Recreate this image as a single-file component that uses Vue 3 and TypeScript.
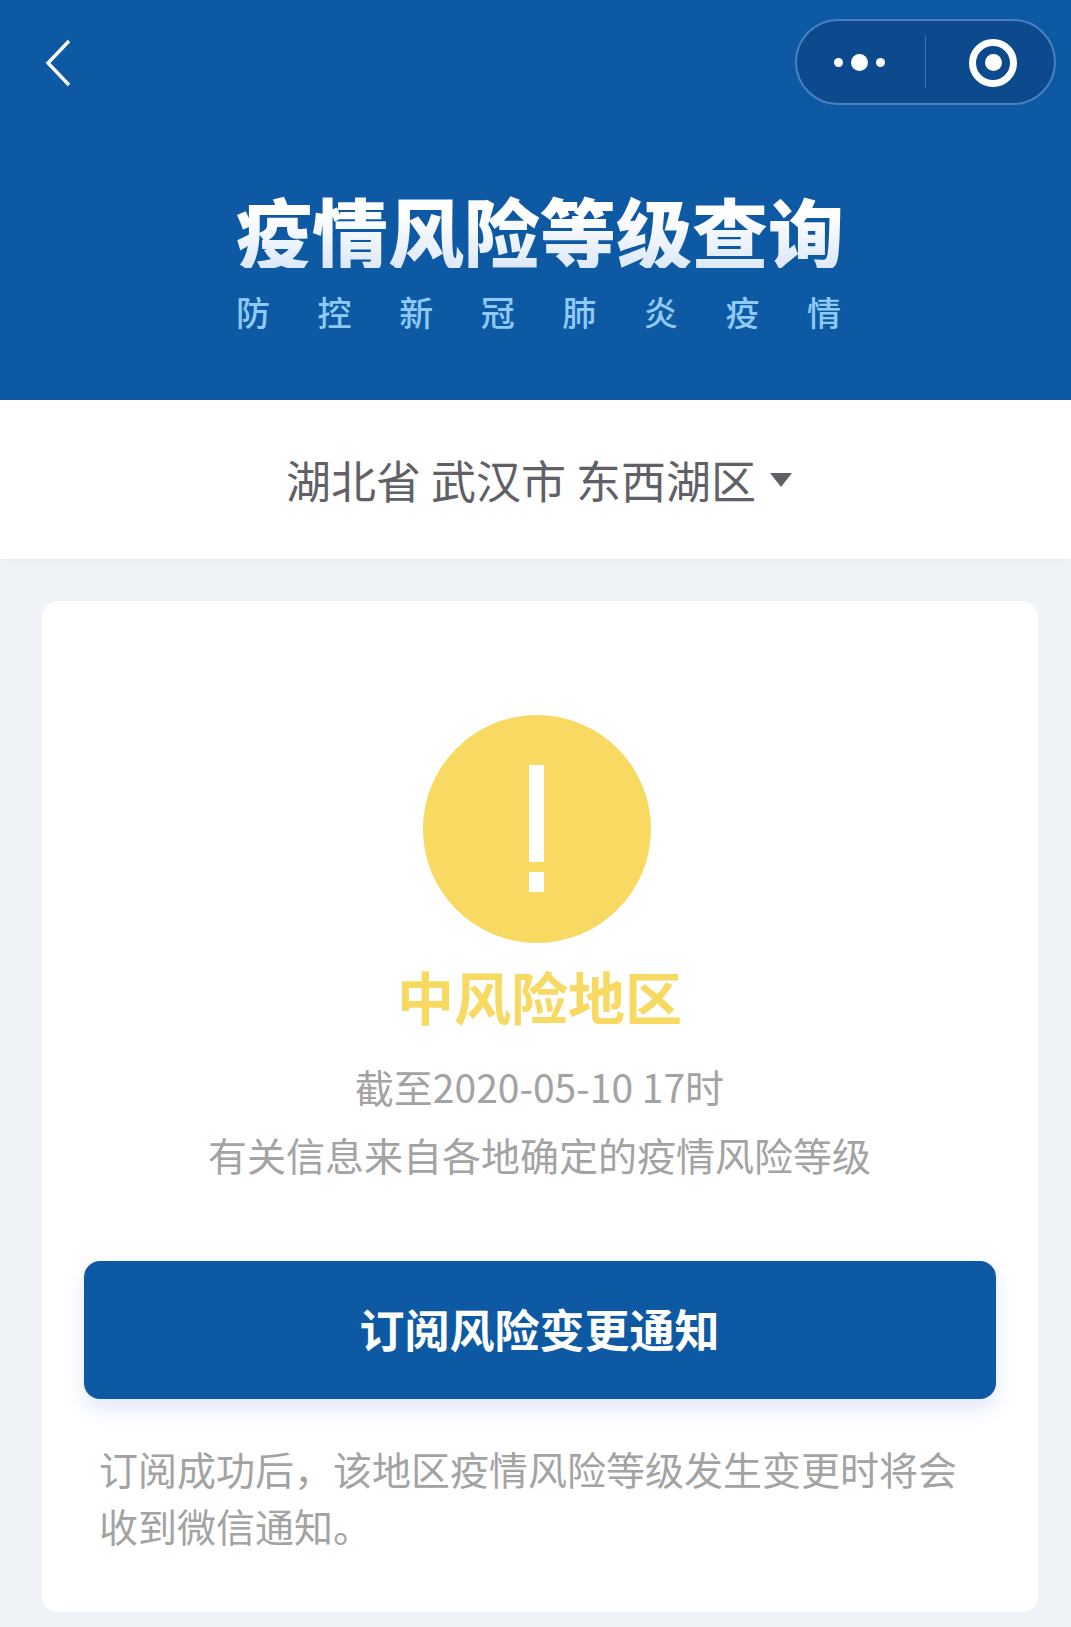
<script setup lang="ts">
const subtitle: string[] = ['防', '控', '新', '冠', '肺', '炎', '疫', '情']
</script>

<template>
  <div class="page">
    <header class="hero">
      <div class="nav">
        <svg class="back" width="26" height="48" viewBox="0 0 26 48">
          <path d="M24 2 L3 24 L24 46" fill="none" stroke="#fff" stroke-width="3.4" />
        </svg>
        <div class="capsule">
          <div class="more">
            <i class="dot"></i><i class="dot big"></i><i class="dot"></i>
          </div>
          <div class="sep"></div>
          <div class="target"><i class="core"></i></div>
        </div>
      </div>
      <div class="title-block">
        <h1 class="title">疫情风险等级查询</h1>
        <div class="subtitle">
          <span v-for="(c, i) in subtitle" :key="i">{{ c }}</span>
        </div>
      </div>
    </header>

    <div class="location">
      <span class="loc-text">湖北省 武汉市 东西湖区</span>
      <i class="caret"></i>
    </div>

    <section class="card">
      <div class="alert">
        <i class="bar"></i>
        <i class="point"></i>
      </div>
      <h2 class="level">中风险地区</h2>
      <p class="meta date">截至2020-05-10 17时</p>
      <p class="meta">有关信息来自各地确定的疫情风险等级</p>
      <button class="subscribe">订阅风险变更通知</button>
      <p class="note">订阅成功后，该地区疫情风险等级发生变更时将会收到微信通知。</p>
    </section>
  </div>
</template>

<style>
html, body { margin: 0; background: #eff3f7; }
</style>

<style scoped>
.page {
  width: 1071px;
  height: 1627px;
  overflow: hidden;
  background: #eff3f7;
  font-family: "Noto Sans CJK SC", "Noto Sans", sans-serif;
}
.hero {
  height: 400px;
  box-sizing: border-box;
  background: #0d59a3;
  padding-top: 19px;
}
.nav {
  display: flex;
  justify-content: space-between;
  align-items: center;
  padding: 0 15px 0 45px;
}
.back { display: block; margin-top: 2px; }
.capsule {
  width: 261px;
  height: 86px;
  box-sizing: border-box;
  display: flex;
  align-items: center;
  border: 2px solid #4a80bf;
  border-radius: 43px;
  background: #0d4a8d;
}
.more {
  width: 128px;
  display: flex;
  justify-content: flex-end;
  align-items: center;
  gap: 8px;
  padding-right: 40px;
  box-sizing: border-box;
}
.dot { width: 9px; height: 9px; border-radius: 50%; background: #fff; }
.dot.big { width: 17px; height: 17px; }
.sep { width: 1px; height: 52px; background: #3f76b5; }
.target {
  width: 48px;
  height: 48px;
  box-sizing: border-box;
  margin: 1px 0 0 43px;
  border: 7px solid #fff;
  border-radius: 50%;
  display: flex;
  align-items: center;
  justify-content: center;
}
.core { width: 17px; height: 17px; border-radius: 50%; background: #fff; }
.title-block {
  width: 605px;
  margin: 87px 0 0 236px;
}
.title {
  margin: 0;
  font-size: 76px;
  line-height: 76px;
  font-weight: 900;
  white-space: nowrap;
  background: linear-gradient(180deg, #ffffff 30%, #dce8f9 100%);
  -webkit-background-clip: text;
  background-clip: text;
  color: transparent;
}
.subtitle {
  margin-top: 26px;
  display: flex;
  justify-content: space-between;
  font-size: 34px;
  line-height: 36px;
  font-weight: 500;
  color: #8fcaf6;
}
.location {
  height: 159px;
  background: #fff;
  display: flex;
  align-items: center;
  justify-content: center;
  padding-left: 9px;
  box-sizing: border-box;
  box-shadow: 0 2px 4px rgba(0, 0, 0, 0.03);
  position: relative;
}
.loc-text {
  font-size: 45px;
  line-height: 60px;
  color: #5f6166;
  white-space: pre;
}
.caret {
  width: 0;
  height: 0;
  margin: 0 2px 0 14px;
  border-left: 11px solid transparent;
  border-right: 11px solid transparent;
  border-top: 14px solid #5f6166;
}
.card {
  width: 996px;
  height: 1011px;
  margin: 42px 0 0 42px;
  box-sizing: border-box;
  padding: 114px 43px 0 42px;
  background: #fff;
  border-radius: 16px;
  display: flex;
  flex-direction: column;
  align-items: center;
}
.alert {
  width: 228px;
  height: 228px;
  flex: none;
  margin-left: -6px;
  padding-top: 50px;
  box-sizing: border-box;
  border-radius: 50%;
  background: #f8d962;
  display: flex;
  flex-direction: column;
  align-items: center;
}
.bar { width: 15px; height: 97px; background: #fff; }
.point { width: 15px; height: 20px; margin-top: 10px; background: #fff; }
.level {
  margin: 16px 0 0;
  font-size: 57px;
  line-height: 72px;
  font-weight: 700;
  color: #f8d962;
}
.meta {
  margin: 0;
  font-size: 39px;
  line-height: 68px;
  color: #a3a3a3;
  white-space: nowrap;
}
.date { margin-top: 21px; }
.subscribe {
  width: 912px;
  height: 138px;
  flex: none;
  margin-top: 73px;
  padding: 0 0 4px;
  border: none;
  border-radius: 16px;
  background: #0d59a3;
  color: #fff;
  font-family: inherit;
  font-size: 45px;
  font-weight: 700;
  box-shadow: 0 10px 20px rgba(40, 90, 230, 0.14);
}
.note {
  width: 880px;
  align-self: flex-start;
  margin: 41px 0 0 15px;
  font-size: 39px;
  line-height: 57px;
  color: #a3a3a3;
}
</style>
